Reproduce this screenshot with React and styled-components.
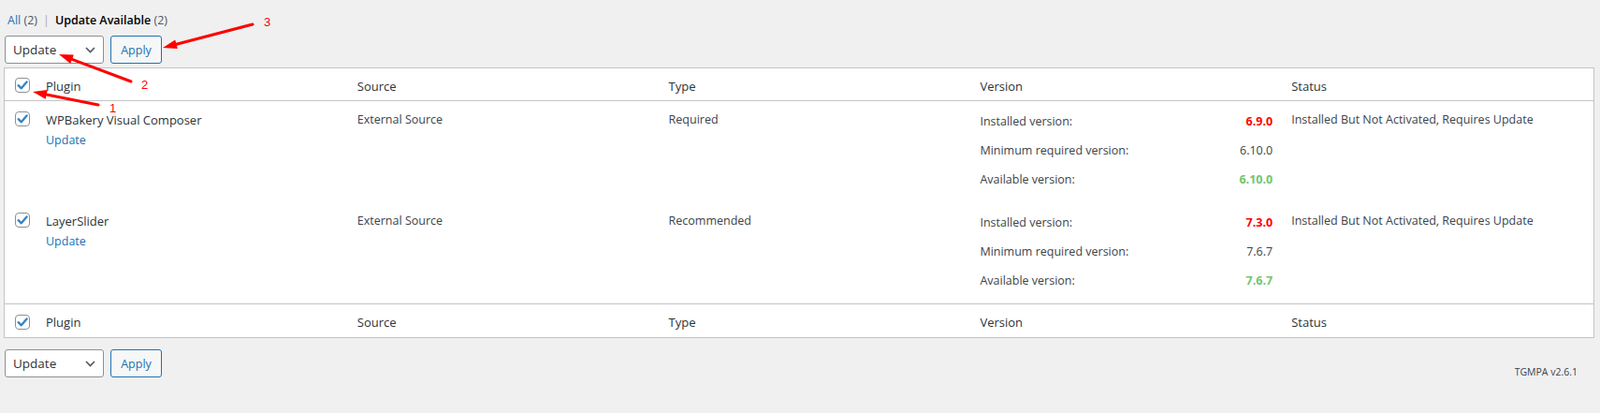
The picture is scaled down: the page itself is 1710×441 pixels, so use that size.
import React from "react";
import styled, { createGlobalStyle } from "styled-components";

const GlobalStyle = createGlobalStyle`
  body {
    margin: 0;
    background: #f0f0f1;
    font-family: "Open Sans", "Noto Sans", sans-serif;
    font-size: 12.5px;
    color: #3c434a;
  }
`;

const Page = styled.div`
  position: relative;
  width: 1710px;
  height: 441px;
  padding: 0 6px 0 4px;
  box-sizing: border-box;
  overflow: hidden;
`;

const SubNav = styled.ul`
  list-style: none;
  margin: 0;
  padding: 13px 0 0 4px;
  display: flex;
  align-items: center;
  line-height: 18px;
  font-size: 12.5px;
  color: #50575e;
`;

const SubItem = styled.li`
  a {
    color: ${(p) => (p.current ? "#000" : "#2271b1")};
    font-weight: ${(p) => (p.current ? 600 : 400)};
    text-decoration: none;
  }
`;

const Sep = styled.span`
  color: #a7aaad;
  margin: 0 6px;
`;

const TableNav = styled.div`
  display: flex;
  align-items: center;
  gap: 7px;
  height: 30px;
  margin: ${(p) => (p.bottom ? "12px 0 0" : "7px 0 4px")};
  padding-left: 1px;
`;

const Select = styled.div`
  box-sizing: border-box;
  width: 106px;
  height: 30px;
  border: 1px solid #8c8f94;
  border-radius: 3px;
  background: #fff;
  color: #2c3338;
  font-size: 13.5px;
  line-height: 28px;
  padding: 0 8px;
  display: flex;
  align-items: center;
  justify-content: space-between;
`;

const Button = styled.button`
  box-sizing: border-box;
  height: 30px;
  width: 55px;
  padding: 0;
  border: 1px solid #2271b1;
  border-radius: 3px;
  background: #f6f7f7;
  color: #2271b1;
  font-family: inherit;
  font-size: 12.5px;
`;

const Version = styled.p`
  margin: 18px 18px 0 auto;
  font-size: 10.5px;
  color: #3c434a;
`;

const Table = styled.table`
  width: 1700px;
  border: 1px solid #c3c4c7;
  border-spacing: 0;
  background: #fff;
  table-layout: fixed;
`;

const HeadCell = styled.th`
  height: ${(p) => (p.foot ? "36px" : "35px")};
  box-sizing: border-box;
  padding: 3px 10px 0;
  text-align: left;
  font-weight: 400;
  font-size: 13px;
  color: #2c3338;
  vertical-align: middle;
  border-${(p) => (p.foot ? "top" : "bottom")}: 1px solid #c3c4c7;
`;

const CheckHead = styled(HeadCell)`
  width: 34px;
  padding: 2px 0 0 11px;
`;

const Cell = styled.td`
  vertical-align: top;
  padding: ${(p) => (p.tight ? "6px 10px 9px" : "11px 10px 0")};
  line-height: 18px;
  font-size: 12.5px;
  color: #3c434a;
`;

const CheckCell = styled.td`
  vertical-align: top;
  padding: 11px 0 0 11px;
  height: 97px;
`;

const PluginName = styled.div`
  font-size: 13px;
  color: #2c3338;
`;

const RowAction = styled.a`
  display: block;
  margin-top: 4px;
  color: #2271b1;
  text-decoration: none;
`;

const VersionLine = styled.div`
  display: flex;
  justify-content: space-between;
  height: 31px;
  line-height: 31px;
`;

const VersionValue = styled.span`
  color: ${(p) => p.color || "#3c434a"};
  font-weight: ${(p) => (p.color ? 700 : 400)};
`;

const Overlay = styled.svg`
  position: absolute;
  left: 0;
  top: 0;
  pointer-events: none;
`;

const Check = () => (
  <svg width="16" height="16" viewBox="0 0 16 16" style={{ display: "block" }}>
    <rect x="0.5" y="0.5" width="15" height="15" rx="3.5" fill="#fff" stroke="#8c8f94" />
    <path d="M3.6 8.2 L6.8 11.3 L12.6 4.4" fill="none" stroke="#3582c4" strokeWidth="2.3" strokeLinecap="round" strokeLinejoin="round" />
  </svg>
);

const Chevron = () => (
  <svg width="11" height="7" viewBox="0 0 11 7">
    <path d="M1 1 L5.5 5.5 L10 1" fill="none" stroke="#50575e" strokeWidth="1.6" />
  </svg>
);

const plugins = [
  {
    name: "WPBakery Visual Composer",
    type: "Required",
    installed: "6.9.0",
    minimum: "6.10.0",
    available: "6.10.0",
  },
  {
    name: "LayerSlider",
    type: "Recommended",
    installed: "7.3.0",
    minimum: "7.6.7",
    available: "7.6.7",
  },
];

const columns = ["Plugin", "Source", "Type", "Version", "Status"];

const arrows = [
  { from: [270, 26], to: [174, 51], label: "3", at: [282, 28] },
  { from: [140, 87], to: [63, 58], label: "2", at: [151, 95] },
  { from: [105, 112], to: [35, 98], label: "1", at: [117, 120] },
];

function Arrow({ from, to, label, at }) {
  const dx = to[0] - from[0];
  const dy = to[1] - from[1];
  const len = Math.hypot(dx, dy);
  const ux = dx / len;
  const uy = dy / len;
  const hl = 15;
  const hw = 5;
  const bx = to[0] - ux * hl;
  const by = to[1] - uy * hl;
  const head = `${to[0]},${to[1]} ${bx - uy * hw},${by + ux * hw} ${bx + uy * hw},${by - ux * hw}`;
  return (
    <g>
      <line x1={from[0]} y1={from[1]} x2={bx} y2={by} stroke="#f00" strokeWidth="3" strokeLinecap="round" />
      <polygon points={head} fill="#f00" />
      <text x={at[0]} y={at[1]} fill="#f00" fontSize="13" fontFamily="Liberation Sans, sans-serif">
        {label}
      </text>
    </g>
  );
}

function Header({ foot }) {
  return (
    <tr>
      <CheckHead foot={foot}>
        <Check />
      </CheckHead>
      {columns.map((c) => (
        <HeadCell key={c} foot={foot}>
          {c}
        </HeadCell>
      ))}
    </tr>
  );
}

function Nav({ bottom }) {
  return (
    <TableNav bottom={bottom}>
      <Select>
        <span>Update</span>
        <Chevron />
      </Select>
      <Button>Apply</Button>
      {bottom && <Version>TGMPA v2.6.1</Version>}
    </TableNav>
  );
}

export default function App() {
  return (
    <Page>
      <GlobalStyle />
      <SubNav>
        <SubItem>
          <a href="#">All</a> (2)
        </SubItem>
        <Sep>|</Sep>
        <SubItem current>
          <a href="#">Update Available</a> (2)
        </SubItem>
      </SubNav>
      <Nav />
      <Table>
        <thead>
          <Header />
        </thead>
        <tbody>
          {plugins.map((p) => (
            <tr key={p.name}>
              <CheckCell>
                <Check />
              </CheckCell>
              <Cell>
                <PluginName>{p.name}</PluginName>
                <RowAction href="#">Update</RowAction>
              </Cell>
              <Cell>External Source</Cell>
              <Cell>{p.type}</Cell>
              <Cell tight>
                <VersionLine>
                  <span>Installed version:</span>
                  <VersionValue color="#ff0000">{p.installed}</VersionValue>
                </VersionLine>
                <VersionLine>
                  <span>Minimum required version:</span>
                  <VersionValue>{p.minimum}</VersionValue>
                </VersionLine>
                <VersionLine>
                  <span>Available version:</span>
                  <VersionValue color="#71c671">{p.available}</VersionValue>
                </VersionLine>
              </Cell>
              <Cell>Installed But Not Activated, Requires Update</Cell>
            </tr>
          ))}
        </tbody>
        <tfoot>
          <Header foot />
        </tfoot>
      </Table>
      <Nav bottom />
      <Overlay width="1710" height="441">
        {arrows.map((a) => (
          <Arrow key={a.label} {...a} />
        ))}
      </Overlay>
    </Page>
  );
}
